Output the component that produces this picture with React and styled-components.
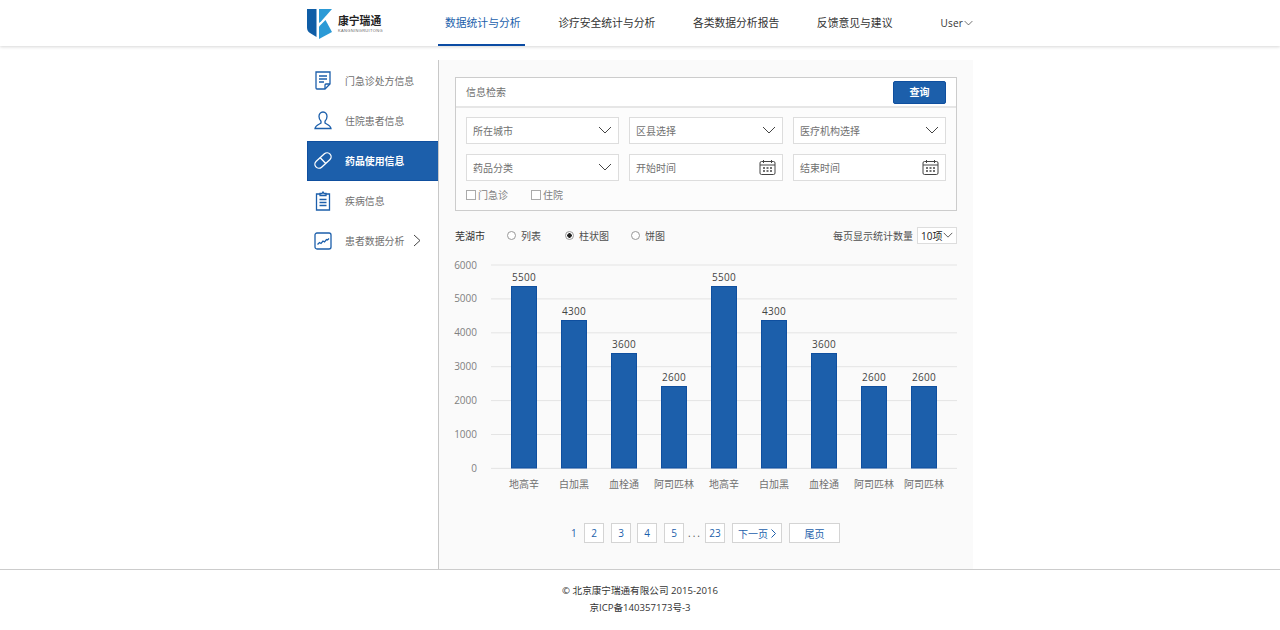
import styled, { createGlobalStyle } from 'styled-components';

const GlobalStyle = createGlobalStyle`
    html, body {
        margin: 0;
        padding: 0;
        background: #fff;
        font-family: "Open Sans", "Noto Sans CJK SC", sans-serif;
    }
    * {
        box-sizing: border-box;
    }
`;

const Page = styled.div`
    width: 1280px;
    height: 630px;
    overflow: hidden;
`;

const Header = styled.header`
    height: 46px;
    background: #fff;
    box-shadow: 0 1px 3px rgba(0, 0, 0, 0.16);
`;

const HeaderInner = styled.div`
    width: 666px;
    height: 46px;
    margin-left: 307px;
    display: flex;
    align-items: center;
`;

const Logo = styled.div`
    width: 138px;
    display: flex;
    align-items: center;
    gap: 6px;
    margin-top: 1px;
`;

const LogoText = styled.div`
    display: flex;
    flex-direction: column;
    color: #222;

    b {
        font-size: 10.8px;
        line-height: 13px;
        font-weight: 700;
    }

    span {
        font-size: 4px;
        line-height: 7px;
        letter-spacing: 0.35px;
        color: #666;
        font-family: "Liberation Sans", sans-serif;
        white-space: nowrap;
    }
`;

const Nav = styled.nav`
    display: flex;
    gap: 37.6px;
    height: 46px;
    align-items: center;
`;

const NavItem = styled.a`
    position: relative;
    font-size: 10.8px;
    line-height: 46px;
    white-space: nowrap;
    color: ${(p) => (p.$active ? '#1c5fab' : '#333')};

    &::after {
        content: '';
        display: ${(p) => (p.$active ? 'block' : 'none')};
        position: absolute;
        left: -7px;
        right: -4px;
        bottom: 0;
        height: 2px;
        background: #0b4ba3;
    }
`;

const UserMenu = styled.div`
    margin-left: 48px;
    display: flex;
    align-items: center;
    gap: 1px;
    font-size: 10px;
    letter-spacing: 0.2px;
    color: #333;
`;

const Content = styled.div`
    width: 666px;
    height: 509px;
    margin: 14px 0 0 307px;
    display: flex;
`;

const Sidebar = styled.aside`
    width: 132px;
    padding-top: 1px;
    border-right: 1px solid #c8c8c8;
`;

const SideItem = styled.div`
    height: 40px;
    padding-bottom: 1px;
    display: flex;
    align-items: center;
    position: relative;
    font-size: 9.9px;
    font-weight: ${(p) => (p.$active ? 700 : 400)};
    color: ${(p) => (p.$active ? '#fff' : '#707070')};
    background: ${(p) => (p.$active ? '#1c5fab' : 'transparent')};
    border: ${(p) => (p.$active ? '1px solid #0f4f9f' : '1px solid transparent')};
    border-right: 0;
`;

const SideIcon = styled.span`
    width: 30px;
    margin-right: 7px;
    display: flex;
    justify-content: center;
`;

const Main = styled.main`
    width: 534px;
    padding: 17px 16px 0;
    background: #fafafa;
`;

const SearchPanel = styled.section`
    height: 134px;
    border: 1px solid #ccc;
    background: #fcfcfc;
`;

const PanelHead = styled.div`
    height: 30px;
    padding: 0 10px;
    display: flex;
    align-items: center;
    justify-content: space-between;
    background: #fff;
    border-bottom: 2px solid #e6e6e6;
    font-size: 10px;
    color: #707070;
`;

const PanelTitle = styled.span`
    margin-top: -2px;
`;

const QueryButton = styled.button`
    width: 53px;
    height: 23px;
    padding: 0 0 2px;
    border: 1px solid #0f4f9f;
    border-radius: 2px;
    background: #1c5fab;
    color: #fff;
    font-family: inherit;
    font-size: 10px;
    font-weight: 700;
`;

const FieldGrid = styled.div`
    display: grid;
    grid-template-columns: 153px 154px 153px;
    column-gap: 10px;
    row-gap: 10px;
    padding: 9px 10px 0;
`;

const Field = styled.div`
    height: 27px;
    padding: 0 6px 1px 6px;
    display: flex;
    align-items: center;
    justify-content: space-between;
    border: 1px solid #ddd;
    background: #fff;
    font-size: 10px;
    color: #707070;
`;

const Checks = styled.div`
    display: flex;
    gap: 23px;
    padding: 7px 10px 0;
    font-size: 10px;
    color: #808080;
`;

const CheckLabel = styled.label`
    display: flex;
    align-items: center;
    gap: 2px;
    line-height: 14px;

    i {
        width: 10px;
        height: 10px;
        border: 1px solid #aaa;
        background: #fff;
    }
`;

const OptionBar = styled.div`
    height: 20px;
    margin-top: 14px;
    display: flex;
    align-items: center;
    font-size: 10px;
    color: #505050;
`;

const City = styled.span`
    width: 52px;
    color: #333;
`;

const Radio = styled.label`
    display: flex;
    align-items: center;
    gap: 5px;
    margin-right: ${(p) => p.$gap}px;

    i {
        width: 9px;
        height: 9px;
        border-radius: 50%;
        border: 1px solid #999;
        background: ${(p) => (p.$checked ? 'radial-gradient(circle, #222 0 2px, #fff 2.5px)' : '#fff')};
    }
`;

const PageSize = styled.div`
    margin-left: auto;
    display: flex;
    align-items: center;
    gap: 4px;
`;

const SizeSelect = styled.div`
    width: 40px;
    height: 17px;
    padding-left: 3px;
    display: flex;
    align-items: center;
    gap: 1px;
    border: 1px solid #ddd;
    background: #fff;
    color: #222;
    font-size: 10px;
`;

const ChartWrap = styled.div`
    margin: 8px 0 0 -5px;
    height: 246px;
`;

const Pager = styled.div`
    margin-top: 24px;
    height: 20px;
    display: flex;
    align-items: center;
    font-size: 10px;
    color: #1c5fab;
`;

const PageBox = styled.a`
    height: 20px;
    width: ${(p) => p.$w || 20}px;
    margin-left: ${(p) => p.$ml ?? 7}px;
    display: flex;
    align-items: center;
    justify-content: center;
    gap: 3px;
    border: 1px solid #d4d4d4;
    background: #fff;
`;

const CurrentPage = styled.span`
    margin-left: 116px;
    width: 6px;
`;

const Dots = styled.span`
    margin-left: 4px;
    width: 17px;
    color: #555;
    letter-spacing: 2px;
`;

const Footer = styled.footer`
    border-top: 1px solid #ccc;
    height: 61px;
    padding-top: 12px;
    text-align: center;
    font-size: 9.6px;
    line-height: 17px;
    color: #333;
`;

const MoreArrow = styled.span`
    display: flex;
    margin-left: 9px;
`;

const Chevron = ({ w = 14, h = 8, color = '#444' }) => (
    <svg width={w} height={h} viewBox="0 0 14 8" fill="none">
        <path d="M1 1l6 6 6-6" stroke={color} strokeWidth="1" />
    </svg>
);

const Calendar = () => (
    <svg width="17" height="17" viewBox="0 0 17 17" fill="none" stroke="#444">
        <rect x="1" y="2.5" width="15" height="13" rx="1.5" />
        <path d="M1 6h15M4.5 1v3M12.5 1v3" />
        <path d="M4 9h2M7.5 9h2M11 9h2M4 12h2M7.5 12h2M11 12h2" strokeWidth="1.4" />
    </svg>
);

const LogoMark = () => (
    <svg width="25" height="31" viewBox="0 0 25 31">
        <path d="M0 1h9.500v28L3 25C1 23.800 0 22 0 19.500z" fill="#0f5da6" />
        <path d="M12 1h13L14 13.500l-2 1.500z" fill="#2b9ad6" />
        <path d="M13.500 17l5-5L25 24l-13 7V18.500z" fill="#2b9ad6" />
    </svg>
);

const icons = {
    paper: (
        <svg width="18" height="19" viewBox="0 0 18 19" fill="none" stroke="#1c5fab" strokeWidth="1.3">
            <path d="M2 1h14v12l-5 5H3a1 1 0 0 1-1-1z" />
            <path d="M16 13h-4a1 1 0 0 0-1 1v4M5 5h8M5 8h8M5 11h5" />
        </svg>
    ),
    user: (
        <svg width="18" height="19" viewBox="0 0 18 19" fill="none" stroke="#1c5fab" strokeWidth="1.3">
            <path d="M9 1c-2.600 0-4 2-4 4.500 0 2.200 1 3.700 2 4.800v1.700c-1.500 1.500-5.500 1.800-6 5.500h16c-.5-3.700-4.500-4-6-5.500v-1.700c1-1.100 2-2.600 2-4.800C13 3 11.600 1 9 1z" />
        </svg>
    ),
    pill: (
        <svg width="20" height="19" viewBox="0 0 20 19" fill="none" stroke="#fff" strokeWidth="1.3">
            <rect x="0.500" y="5.500" width="19" height="8" rx="4" transform="rotate(-42 10 9.500)" />
            <path d="M7 6.500l5.800 6" />
        </svg>
    ),
    clipboard: (
        <svg width="16" height="20" viewBox="0 0 16 20" fill="none" stroke="#1c5fab" strokeWidth="1.3">
            <path d="M5 3H1.500v16h13V3H11" />
            <path d="M5 4.500V2.500h2L8 1l1 1.500h2v2zM4.500 8.500h7M4.500 11.500h7M4.500 14.500h7" />
        </svg>
    ),
    trend: (
        <svg width="18" height="18" viewBox="0 0 18 18" fill="none" stroke="#1c5fab" strokeWidth="1.3">
            <rect x="1" y="1" width="16" height="16" rx="2" />
            <path d="M3.500 12.500l2-2 1.500 1 2-2.500 1.500 1 2-2.500 1 .5 1.500-1.500" />
        </svg>
    ),
};

const sideItems = [
    { icon: 'paper', label: '门急诊处方信息' },
    { icon: 'user', label: '住院患者信息' },
    { icon: 'pill', label: '药品使用信息', active: true },
    { icon: 'clipboard', label: '疾病信息' },
    { icon: 'trend', label: '患者数据分析', more: true },
];

const bars = [
    { name: '地高辛', value: 5500, top: 286 },
    { name: '白加黑', value: 4300, top: 320 },
    { name: '血栓通', value: 3600, top: 353 },
    { name: '阿司匹林', value: 2600, top: 386 },
    { name: '地高辛', value: 5500, top: 286 },
    { name: '白加黑', value: 4300, top: 320 },
    { name: '血栓通', value: 3600, top: 353 },
    { name: '阿司匹林', value: 2600, top: 386 },
    { name: '阿司匹林', value: 2600, top: 386 },
];

// svg origin is at page (450, 253)
const BarChart = () => {
    const ox = 450;
    const oy = 253;
    const ticks = [6000, 5000, 4000, 3000, 2000, 1000, 0];
    return (
        <svg width="512" height="246" viewBox="0 0 512 246" fontFamily='"Open Sans", "Noto Sans CJK SC", sans-serif'>
            {ticks.map((t, i) => {
                const y = 265 + i * 33.9 - oy;
                return (
                    <g key={t}>
                        <line x1={491 - ox} x2={957 - ox} y1={y} y2={y} stroke="#e4e4e4" strokeWidth="1" />
                        <text x={477 - ox} y={y + 3.500} textAnchor="end" fontSize="10" fill="#808080">{t}</text>
                    </g>
                );
            })}
            {bars.map((b, i) => {
                const x = 511 + i * 50 - ox;
                return (
                    <g key={i}>
                        <rect x={x + 0.500} y={b.top - oy + 0.500} width="25" height={468 - b.top - 0.500} fill="#1c5fab" stroke="#0f4f9f" />
                        <text x={x + 13} y={b.top - oy - 5} textAnchor="middle" fontSize="10" letterSpacing="0.3" fill="#444">{b.value}</text>
                        <text x={x + 13} y={488 - oy} textAnchor="middle" fontSize="10" fill="#707070">{b.name}</text>
                    </g>
                );
            })}
        </svg>
    );
};

function App() {
    return (
        <Page>
            <GlobalStyle />
            <Header>
                <HeaderInner>
                    <Logo>
                        <LogoMark />
                        <LogoText>
                            <b>康宁瑞通</b>
                            <span>KANGNINGRUITONG</span>
                        </LogoText>
                    </Logo>
                    <Nav>
                        <NavItem $active>数据统计与分析</NavItem>
                        <NavItem>诊疗安全统计与分析</NavItem>
                        <NavItem>各类数据分析报告</NavItem>
                        <NavItem>反馈意见与建议</NavItem>
                    </Nav>
                    <UserMenu>User <Chevron w={9} h={6} color="#222" /></UserMenu>
                </HeaderInner>
            </Header>
            <Content>
                <Sidebar>
                    {sideItems.map((item) => (
                        <SideItem key={item.label} $active={item.active}>
                            <SideIcon>{icons[item.icon]}</SideIcon>
                            {item.label}
                            {item.more && (
                                <MoreArrow>
                                    <svg width="8" height="13" viewBox="0 0 8 13" fill="none">
                                        <path d="M1 1l6 5.500-6 5.500" stroke="#444" />
                                    </svg>
                                </MoreArrow>
                            )}
                        </SideItem>
                    ))}
                </Sidebar>
                <Main>
                    <SearchPanel>
                        <PanelHead>
                            <PanelTitle>信息检索</PanelTitle>
                            <QueryButton>查询</QueryButton>
                        </PanelHead>
                        <FieldGrid>
                            <Field>所在城市<Chevron /></Field>
                            <Field>区县选择<Chevron /></Field>
                            <Field>医疗机构选择<Chevron /></Field>
                            <Field>药品分类<Chevron /></Field>
                            <Field>开始时间<Calendar /></Field>
                            <Field>结束时间<Calendar /></Field>
                        </FieldGrid>
                        <Checks>
                            <CheckLabel><i />门急诊</CheckLabel>
                            <CheckLabel><i />住院</CheckLabel>
                        </Checks>
                    </SearchPanel>
                    <OptionBar>
                        <City>芜湖市</City>
                        <Radio $gap={24}><i />列表</Radio>
                        <Radio $gap={22} $checked><i />柱状图</Radio>
                        <Radio $gap={0}><i />饼图</Radio>
                        <PageSize>
                            每页显示统计数量
                            <SizeSelect>10项<Chevron w={10} h={6} color="#222" /></SizeSelect>
                        </PageSize>
                    </OptionBar>
                    <ChartWrap>
                        <BarChart />
                    </ChartWrap>
                    <Pager>
                        <CurrentPage>1</CurrentPage>
                        <PageBox>2</PageBox>
                        <PageBox>3</PageBox>
                        <PageBox $ml={6}>4</PageBox>
                        <PageBox>5</PageBox>
                        <Dots>...</Dots>
                        <PageBox $ml={0}>23</PageBox>
                        <PageBox $w={50}>
                            下一页
                            <svg width="5" height="9" viewBox="0 0 5 9" fill="none">
                                <path d="M.5.500l4 4-4 4" stroke="#1c5fab" />
                            </svg>
                        </PageBox>
                        <PageBox $w={51}>尾页</PageBox>
                    </Pager>
                </Main>
            </Content>
            <Footer>
                <div>© 北京康宁瑞通有限公司 2015-2016</div>
                <div>京ICP备140357173号-3</div>
            </Footer>
        </Page>
    );
}

export default App;
